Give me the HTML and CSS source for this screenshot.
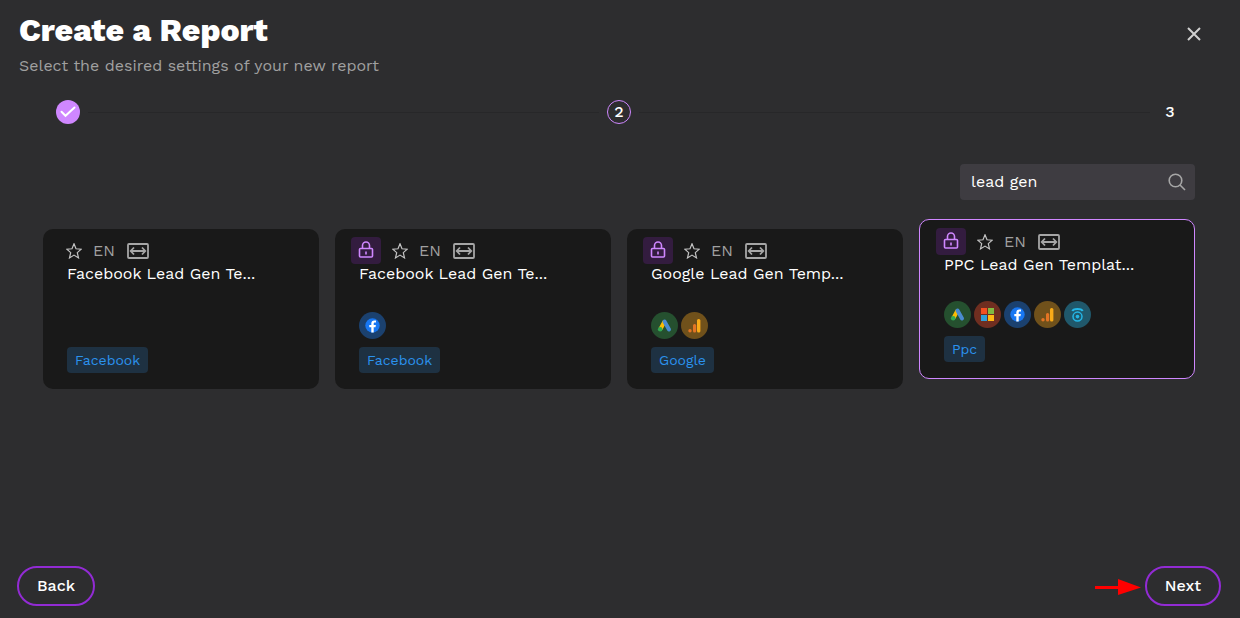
FILE: index.html
```html
<!DOCTYPE html>
<html lang="en">

<head>
    <meta charset="UTF-8">
    <meta name="viewport" content="width=device-width, initial-scale=1.0">
    <title>Create a Report</title>
    <link rel="stylesheet" href="styles.css">
</head>

<body>
    <!-- shared icons -->
    <svg class="sprite" aria-hidden="true">
        <symbol id="lock" viewBox="0 0 16 18">
            <path d="M4.500 8V4.500a3.500 3.500 0 0 1 7 0V8M8 10.500v3" />
            <rect x="1.500" y="7.500" width="13" height="8.500" rx="1" />
        </symbol>
        <symbol id="star" viewBox="0 0 16 16">
            <path d="M8 .8l2 5 5.200.4-3.900 3.400 1.200 5.300L8 12.100l-4.500 2.800 1.200-5.300L.8 6.200 6 5.800z" />
        </symbol>
        <symbol id="wide" viewBox="0 0 22 16">
            <rect x="1" y="1" width="20" height="14" rx="1" />
            <path d="M4 8h14M7 4.500L3.700 8 7 11.500M15 4.500L18.300 8 15 11.500" />
        </symbol>
        <symbol id="facebook" viewBox="0 0 27 27">
            <circle cx="13.500" cy="13.500" r="7.200" fill="#1877f2" />
            <path fill="#fff" d="M12.300 20.500v-5.200h-2v-2.200h2v-1.500c0-2.100 1.200-3.200 3-3.200l1.700.1v1.900h-1c-1 0-1.300.5-1.300 1.200v1.500h2.200l-.4 2.200h-1.800v5.200z" />
        </symbol>
        <symbol id="ads" viewBox="0 0 27 27">
            <path d="M13.500 9.500L9.500 17" stroke="#fbbc04" stroke-width="4" />
            <path d="M13.500 9.500l4.500 8" stroke="#4a8bd0" stroke-width="4" stroke-linecap="round" />
            <circle cx="9.200" cy="17.300" r="2.300" fill="#34a853" />
        </symbol>
        <symbol id="analytics" viewBox="0 0 27 27">
            <rect x="16" y="7" width="3.400" height="13.500" rx="1.500" fill="#f9ab18" />
            <rect x="12" y="12" width="3.200" height="8.500" rx="1.500" fill="#e37424" />
            <circle cx="9" cy="18.800" r="1.700" fill="#e37424" />
        </symbol>
        <symbol id="microsoft" viewBox="0 0 27 27">
            <path fill="#f25022" d="M7 7h6v6H7z" />
            <path fill="#7fba42" d="M14 7h6v6h-6z" />
            <path fill="#2f9fd8" d="M7 14h6v6H7z" />
            <path fill="#ffb914" d="M14 14h6v6h-6z" />
        </symbol>
        <symbol id="calls" viewBox="0 0 27 27">
            <g fill="none" stroke="#24b6e6">
                <path d="M8.600 10.200c.2-1.500 2.400-2.200 4.900-2.200s4.700.7 4.900 2.200" stroke-width="2.200" />
                <circle cx="13.500" cy="15.600" r="4.500" stroke-width="1.500" />
            </g>
            <circle cx="13.500" cy="15.600" r="1.800" fill="#24b6e6" />
        </symbol>
    </svg>

    <header class="header">
        <div>
            <h1>Create a Report</h1>
            <p class="subtitle">Select the desired settings of your new report</p>
        </div>
        <button type="button" class="close" aria-label="Close">
            <svg width="14" height="14" viewBox="0 0 14 14"><path d="M1 1l12 12M13 1L1 13" /></svg>
        </button>
    </header>

    <div class="steps">
        <span class="step done">
            <svg width="16" height="12" viewBox="0 0 16 12"><path d="M1.500 5.800l4 4L14.500 1.500" /></svg>
        </span>
        <span class="line"></span>
        <span class="step current">2</span>
        <span class="line"></span>
        <span class="step">3</span>
    </div>

    <main class="content">
        <label class="search">
            <input type="text" value="lead gen" aria-label="Search templates">
            <svg width="18" height="18" viewBox="0 0 18 18"><circle cx="7.500" cy="7.500" r="6.300" /><path d="M12 12l5 5" /></svg>
        </label>

        <div class="cards">
            <article class="card">
                <div class="meta">
                    <svg class="star"><use href="#star" /></svg>
                    <span class="lang">EN</span>
                    <svg class="wide"><use href="#wide" /></svg>
                </div>
                <h2>Facebook Lead Gen Te...</h2>
                <div class="card-bottom">
                    <span class="tag">Facebook</span>
                </div>
            </article>

            <article class="card">
                <div class="meta locked">
                    <span class="lock"><svg><use href="#lock" /></svg></span>
                    <svg class="star"><use href="#star" /></svg>
                    <span class="lang">EN</span>
                    <svg class="wide"><use href="#wide" /></svg>
                </div>
                <h2>Facebook Lead Gen Te...</h2>
                <div class="card-bottom">
                    <div class="sources">
                        <svg class="source blue"><use href="#facebook" /></svg>
                    </div>
                    <span class="tag">Facebook</span>
                </div>
            </article>

            <article class="card">
                <div class="meta locked">
                    <span class="lock"><svg><use href="#lock" /></svg></span>
                    <svg class="star"><use href="#star" /></svg>
                    <span class="lang">EN</span>
                    <svg class="wide"><use href="#wide" /></svg>
                </div>
                <h2>Google Lead Gen Temp...</h2>
                <div class="card-bottom">
                    <div class="sources">
                        <svg class="source green"><use href="#ads" /></svg>
                        <svg class="source amber"><use href="#analytics" /></svg>
                    </div>
                    <span class="tag">Google</span>
                </div>
            </article>

            <article class="card selected">
                <div class="meta locked">
                    <span class="lock"><svg><use href="#lock" /></svg></span>
                    <svg class="star"><use href="#star" /></svg>
                    <span class="lang">EN</span>
                    <svg class="wide"><use href="#wide" /></svg>
                </div>
                <h2>PPC Lead Gen Templat...</h2>
                <div class="card-bottom">
                    <div class="sources">
                        <svg class="source green"><use href="#ads" /></svg>
                        <svg class="source red"><use href="#microsoft" /></svg>
                        <svg class="source blue"><use href="#facebook" /></svg>
                        <svg class="source amber"><use href="#analytics" /></svg>
                        <svg class="source teal"><use href="#calls" /></svg>
                    </div>
                    <span class="tag">Ppc</span>
                </div>
            </article>
        </div>
    </main>

    <footer class="footer">
        <button type="button" class="btn">Back</button>
        <div class="next">
            <svg width="46" height="18" viewBox="0 0 46 18"><path fill="#f00" d="M0 9h23V2l23 8.500L23 18v-6H0z" /></svg>
            <button type="button" class="btn">Next</button>
        </div>
    </footer>
</body>

</html>
```
FILE: styles.css
```css
* {
    box-sizing: border-box;
}

body {
    margin: 0;
    min-height: 100vh;
    display: flex;
    flex-direction: column;
    background: #2d2d2f;
    color: #fff;
    font-family: "Work Sans", Inter, sans-serif;
    font-size: 16px;
    line-height: 20px;
}

svg {
    display: block;
    flex: none;
    fill: none;
}

.sprite {
    position: absolute;
    width: 0;
    height: 0;
}

.header {
    display: flex;
    justify-content: space-between;
    align-items: flex-start;
    padding: 10px 30px 0 19px;
}

h1 {
    margin: 0;
    font-size: 32px;
    line-height: 40px;
    font-weight: 800;
}

.subtitle {
    margin: 6px 0 0;
    color: #a0a0a0;
}

.close {
    margin-top: 8px;
    padding: 9px;
    border: none;
    background: none;
    cursor: pointer;
}

.close svg {
    stroke: #d0d0d0;
    stroke-width: 2;
}

.steps {
    display: flex;
    align-items: center;
    gap: 8px;
    margin-top: 24px;
    padding: 0 58px 0 56px;
}

.step {
    display: flex;
    align-items: center;
    justify-content: center;
    width: 24px;
    height: 24px;
    border-radius: 50%;
    font-weight: 500;
}

.step.done {
    background: #cf87ff;
}

.step.done svg {
    stroke: #fff;
    stroke-width: 2;
    stroke-linecap: round;
}

.step.current {
    border: 1px solid #cf87ff;
}

.line {
    flex: 1;
    height: 1px;
    background: #272729;
}

.content {
    flex: 1;
    padding: 40px 45px 24px 43px;
}

.search {
    display: flex;
    align-items: center;
    width: 235px;
    height: 36px;
    margin-left: auto;
    padding: 0 9px 0 11px;
    background: #3e3c41;
    border-radius: 4px;
}

.search input {
    flex: 1;
    min-width: 0;
    padding: 0;
    border: none;
    outline: none;
    background: none;
    color: #fff;
    font: inherit;
}

.search svg {
    stroke: #a6a6a6;
    stroke-width: 1.6;
}

.cards {
    display: grid;
    grid-template-columns: repeat(4, 1fr);
    gap: 16px;
    margin-top: 29px;
}

.card {
    display: flex;
    flex-direction: column;
    min-height: 160px;
    padding: 8px 24px 16px;
    background: #191919;
    border-radius: 10px;
}

/* the chosen template is lifted above the others */
.card.selected {
    margin: -10px 0 10px;
    border: 1px solid #cf87ff;
}

.meta {
    display: flex;
    align-items: center;
    gap: 11px;
    height: 27px;
    margin-left: -1px;
    color: #a0a0a0;
}

.meta.locked {
    margin-left: -8px;
}

.lang {
    width: 23px;
}

.lock {
    padding: 4px 7px 5px;
    border-radius: 4px;
    background: #331c3f;
}

.lock svg {
    width: 16px;
    height: 18px;
    stroke: #cf87ff;
    stroke-width: 1.6;
}

.star {
    width: 16px;
    height: 16px;
    stroke: #c4c4c4;
    stroke-width: 1.2;
}

.wide {
    width: 22px;
    height: 16px;
    stroke: #a6a6a6;
    stroke-width: 1.8;
}

h2 {
    margin: 0;
    font-size: 16px;
    line-height: 20px;
    font-weight: 400;
    white-space: nowrap;
}

.card-bottom {
    display: flex;
    flex-direction: column;
    align-items: flex-start;
    gap: 8px;
    margin-top: auto;
}

.sources {
    display: flex;
    gap: 3px;
}

.source {
    width: 27px;
    height: 27px;
    border-radius: 50%;
}

.blue {
    background: #1b416f;
}

.green {
    background: #25502f;
}

.amber {
    background: #70511b;
}

.red {
    background: #6f2e20;
}

.teal {
    background: #20586b;
}

.tag {
    padding: 3px 8px;
    border-radius: 4px;
    background: #1e3142;
    color: #2b92ee;
    font-size: 14px;
}

.footer {
    display: flex;
    justify-content: space-between;
    padding: 0 19px 12px 17px;
}

.next {
    display: flex;
    align-items: center;
    gap: 4px;
}

.btn {
    height: 40px;
    padding: 0 18px;
    border: 2px solid #922bd4;
    border-radius: 20px;
    background: none;
    color: #fff;
    font: inherit;
    font-weight: 500;
    cursor: pointer;
}
```
